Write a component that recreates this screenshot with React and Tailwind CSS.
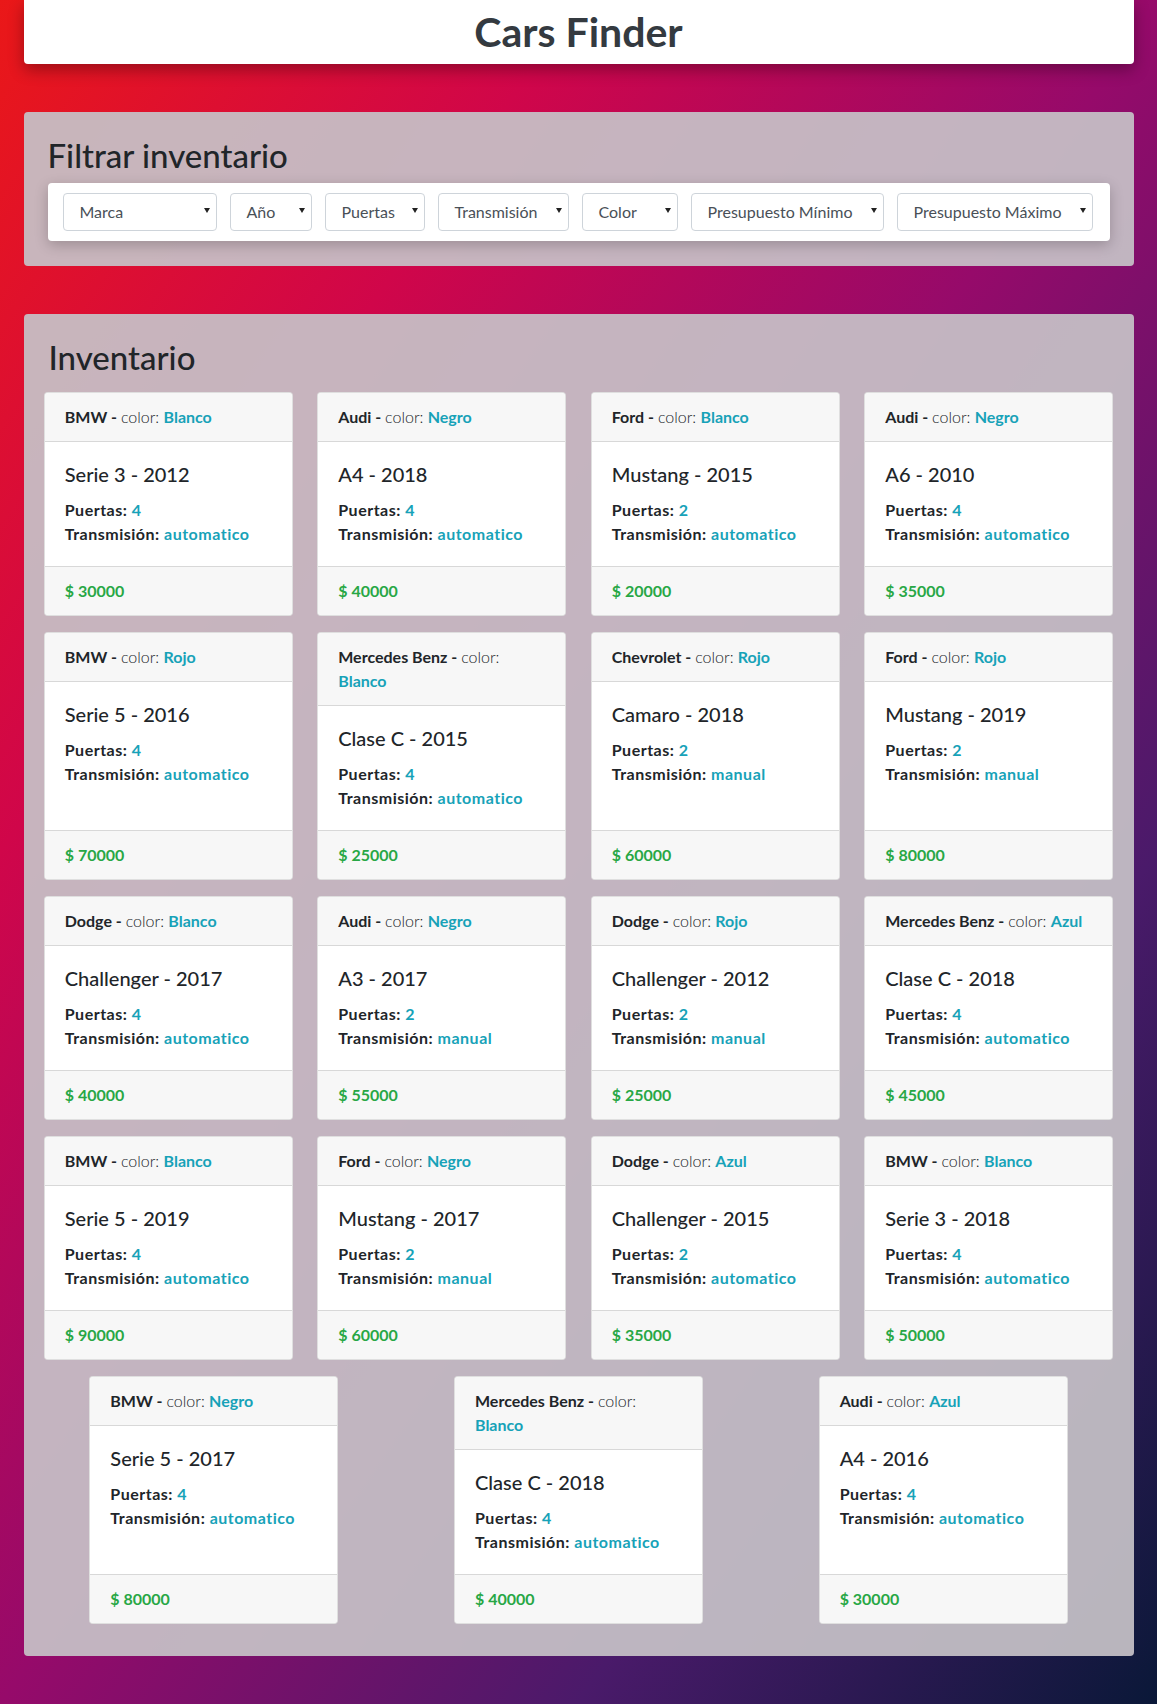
import React from 'react';

const filters = [
  { label: 'Marca', w: 'w-[154px]' },
  { label: 'Año', w: 'w-[82px]' },
  { label: 'Puertas', w: 'w-[100px]' },
  { label: 'Transmisión', w: 'w-[131px]' },
  { label: 'Color', w: 'w-[96px]' },
  { label: 'Presupuesto Mínimo', w: 'w-[193px]' },
  { label: 'Presupuesto Máximo', w: 'w-[196px]' },
];

const cars = [
  { marca: 'BMW', modelo: 'Serie 3', year: 2012, precio: 30000, puertas: 4, color: 'Blanco', transmision: 'automatico' },
  { marca: 'Audi', modelo: 'A4', year: 2018, precio: 40000, puertas: 4, color: 'Negro', transmision: 'automatico' },
  { marca: 'Ford', modelo: 'Mustang', year: 2015, precio: 20000, puertas: 2, color: 'Blanco', transmision: 'automatico' },
  { marca: 'Audi', modelo: 'A6', year: 2010, precio: 35000, puertas: 4, color: 'Negro', transmision: 'automatico' },
  { marca: 'BMW', modelo: 'Serie 5', year: 2016, precio: 70000, puertas: 4, color: 'Rojo', transmision: 'automatico' },
  { marca: 'Mercedes Benz', modelo: 'Clase C', year: 2015, precio: 25000, puertas: 4, color: 'Blanco', transmision: 'automatico' },
  { marca: 'Chevrolet', modelo: 'Camaro', year: 2018, precio: 60000, puertas: 2, color: 'Rojo', transmision: 'manual' },
  { marca: 'Ford', modelo: 'Mustang', year: 2019, precio: 80000, puertas: 2, color: 'Rojo', transmision: 'manual' },
  { marca: 'Dodge', modelo: 'Challenger', year: 2017, precio: 40000, puertas: 4, color: 'Blanco', transmision: 'automatico' },
  { marca: 'Audi', modelo: 'A3', year: 2017, precio: 55000, puertas: 2, color: 'Negro', transmision: 'manual' },
  { marca: 'Dodge', modelo: 'Challenger', year: 2012, precio: 25000, puertas: 2, color: 'Rojo', transmision: 'manual' },
  { marca: 'Mercedes Benz', modelo: 'Clase C', year: 2018, precio: 45000, puertas: 4, color: 'Azul', transmision: 'automatico' },
  { marca: 'BMW', modelo: 'Serie 5', year: 2019, precio: 90000, puertas: 4, color: 'Blanco', transmision: 'automatico' },
  { marca: 'Ford', modelo: 'Mustang', year: 2017, precio: 60000, puertas: 2, color: 'Negro', transmision: 'manual' },
  { marca: 'Dodge', modelo: 'Challenger', year: 2015, precio: 35000, puertas: 2, color: 'Azul', transmision: 'automatico' },
  { marca: 'BMW', modelo: 'Serie 3', year: 2018, precio: 50000, puertas: 4, color: 'Blanco', transmision: 'automatico' },
  { marca: 'BMW', modelo: 'Serie 5', year: 2017, precio: 80000, puertas: 4, color: 'Negro', transmision: 'automatico' },
  { marca: 'Mercedes Benz', modelo: 'Clase C', year: 2018, precio: 40000, puertas: 4, color: 'Blanco', transmision: 'automatico' },
  { marca: 'Audi', modelo: 'A4', year: 2016, precio: 30000, puertas: 4, color: 'Azul', transmision: 'automatico' },
];

function FakeSelect({ label, w }) {
  return (
    <div className={`${w} h-[38px] shrink-0 flex items-center rounded border border-[#ced4da] bg-white pl-4 pr-[6px] text-[16px] text-[#495057]`}>
      <span className="whitespace-nowrap">{label}</span>
      <span className="ml-auto -mt-[3px] h-0 w-0 border-x-[3px] border-t-[5px] border-x-transparent border-t-[#222]" />
    </div>
  );
}

function CarCard({ car }) {
  // "Mercedes Benz - color: Blanco" no cabe en una línea
  const largo = car.marca.length + car.color.length > 17;
  return (
    <div className="mx-3 w-[249px] flex flex-col rounded border border-black/[0.125] bg-white">
      <div className="rounded-t bg-[#f7f7f7] border-b border-black/[0.125] px-5 py-3 text-[16px] leading-6">
        <span className="whitespace-nowrap">
          <span className="font-bold">{car.marca} - </span>
          <span className="font-light">color: </span>
        </span>
        {largo && <br />}
        <span className="font-bold text-[#17a2b8]">{car.color}</span>
      </div>
      <div className="flex-1 p-5">
        <h5 className="mb-3 text-[20px] leading-[24px] font-medium">{car.modelo} - {car.year}</h5>
        <p className="font-bold leading-6 tracking-[0.5px]">Puertas: <span className="text-[#17a2b8]">{car.puertas}</span></p>
        <p className="font-bold leading-6 tracking-[0.5px]">Transmisión: <span className="text-[#17a2b8]">{car.transmision}</span></p>
      </div>
      <div className="rounded-b bg-[#f7f7f7] border-t border-black/[0.125] px-5 py-3 leading-6">
        <span className="font-bold text-[#28a745]">$ {car.precio}</span>
      </div>
    </div>
  );
}

export default function App() {
  return (
    <div className="min-h-screen pb-12 bg-[linear-gradient(to_bottom_right,#ea1818,#d0064a,#960a6a,#4a1a6a,#0a1838)] font-['Lato','Open_Sans',sans-serif] text-[#212529]">
      <div className="mx-auto w-[1110px]">
        <header className="h-16 flex items-center justify-center rounded-b bg-white shadow-[0_6px_16px_rgba(0,0,0,0.32)]">
          <h1 className="text-[41px] leading-[48px] font-bold text-[#343a40]">Cars Finder</h1>
        </header>

        <section className="mt-12 rounded bg-[rgba(198,194,199,0.93)] px-6 pt-6 pb-[25px]">
          <h2 className="mb-[9px] text-[33px] leading-[38px] font-medium">Filtrar inventario</h2>
          <div className="flex gap-[13px] rounded bg-white px-[15px] py-[10px] shadow-[0_4px_14px_rgba(0,0,0,0.22)]">
            {filters.map((f) => (
              <FakeSelect key={f.label} label={f.label} w={f.w} />
            ))}
          </div>
        </section>

        <section className="mt-12 rounded bg-[rgba(198,194,199,0.93)] px-2 pt-6 pb-8">
          <h2 className="mb-4 pl-[17px] text-[33px] leading-[38px] font-medium">Inventario</h2>
          <div className="flex flex-wrap justify-around gap-y-4">
            {cars.map((car, i) => (
              <CarCard key={i} car={car} />
            ))}
          </div>
        </section>
      </div>
    </div>
  );
}
